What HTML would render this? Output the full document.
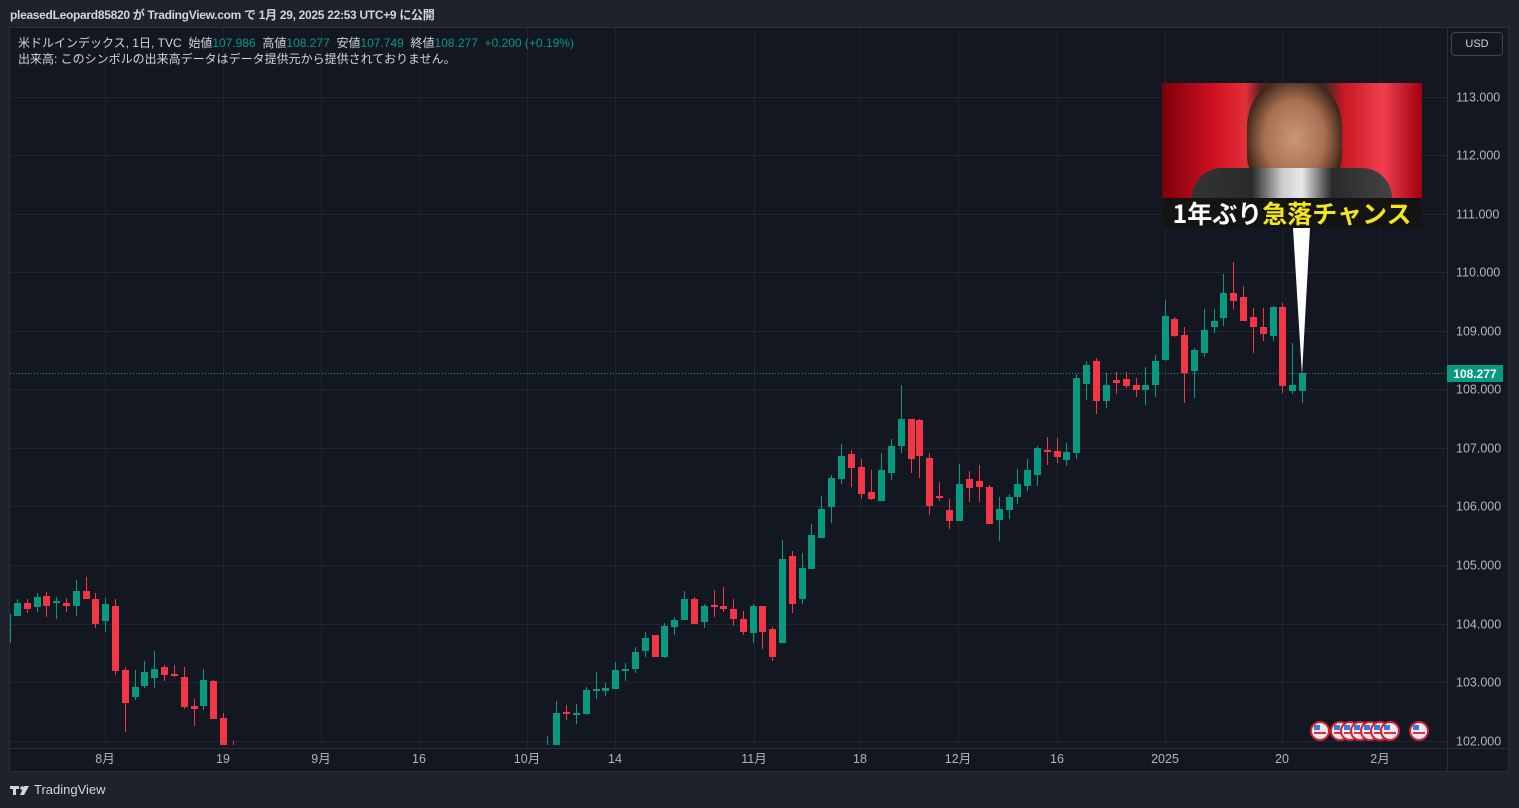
<!DOCTYPE html>
<html><head><meta charset="utf-8">
<style>
html,body{margin:0;padding:0;width:1519px;height:808px;overflow:hidden;background:#1e222d;font-family:"Liberation Sans","Noto Sans CJK JP",sans-serif;}
.hdr{position:absolute;left:10px;top:6px;font-size:12px;color:#d1d4dc;font-weight:bold;letter-spacing:-0.3px;}
.chart{position:absolute;left:9px;top:27px;width:1500px;height:745px;background:#131722;border:1px solid #2a2e39;box-sizing:border-box;}
.legend{position:absolute;left:18px;top:35px;font-size:12px;color:#d1d4dc;line-height:16px;}
.g{color:#089981}
.usd{position:absolute;left:1451px;top:32px;width:52px;height:24px;border:1px solid #434651;border-radius:4px;box-sizing:border-box;color:#d1d4dc;font-size:11px;text-align:center;line-height:22px;background:#131722;}
.foot{position:absolute;left:34px;top:782px;font-size:13px;color:#d1d4dc;}
</style></head><body>
<div class="hdr">pleasedLeopard85820 が TradingView.com で 1月 29, 2025 22:53 UTC+9 に公開</div>
<div class="chart"></div>
<svg id="s" width="1519" height="808" style="position:absolute;left:0;top:0">
</svg>
<div class="legend">米ドルインデックス, 1日, TVC&nbsp; 始値<span class="g">107.986</span>&nbsp; 高値<span class="g">108.277</span>&nbsp; 安値<span class="g">107.749</span>&nbsp; 終値<span class="g">108.277&nbsp; +0.200 (+0.19%)</span><br>出来高: このシンボルの出来高データはデータ提供元から提供されておりません。</div>
<div class="usd">USD</div>
<div style="position:absolute;left:1162px;top:83px;width:260px;height:145px;overflow:hidden;background:linear-gradient(90deg,#7a0008 0%,#d01020 20%,#e2303a 32%,#5a2020 38%,#3a2a28 62%,#c81824 70%,#f04050 85%,#a00010 100%);">
 <div style="position:absolute;left:85px;top:-5px;width:95px;height:110px;background:radial-gradient(ellipse at 50% 55%,#c89878 0%,#a87050 45%,#3a2218 75%,#1a1010 100%);border-radius:45% 45% 30% 30%"></div>
 <div style="position:absolute;left:30px;top:85px;width:200px;height:35px;background:linear-gradient(90deg,#333 0%,#2a2a2c 30%,#ccc 45%,#e8e8e8 55%,#2a2a2c 70%,#444 100%);border-radius:30px 30px 0 0"></div>
 <div style="position:absolute;left:0;top:115px;width:260px;height:30px;background:#141414;font-weight:bold;font-size:25px;line-height:30px;text-align:center;white-space:nowrap;font-family:'Noto Sans CJK JP',sans-serif;"><span style="color:#fff">1年ぶり</span><span style="color:#f5e51c">急落チャンス</span></div>
</div>
<div class="foot">TradingView</div>
<script>
var s=document.getElementById('s'),h='';
var ys=[97,155,214,272,331,389,448,506,565,624,682,741];
var vx=[105,223,321,419,527,615,754,860,958,1057,1165,1282,1380];
vx.forEach(function(x){h+='<line x1="'+(x+.5)+'" y1="28" x2="'+(x+.5)+'" y2="748" stroke="#1f2330"/>';});
ys.forEach(function(y){h+='<line x1="10" y1="'+(y+.5)+'" x2="1447" y2="'+(y+.5)+'" stroke="#222631"/>';});
h+='<line x1="1447.5" y1="28" x2="1447.5" y2="771" stroke="#2a2e39"/>';
h+='<line x1="10" y1="748.5" x2="1508" y2="748.5" stroke="#2a2e39"/>';
var pl=['113.000','112.000','111.000','110.000','109.000','108.000','107.000','106.000','105.000','104.000','103.000','102.000'];
pl.forEach(function(t,i){h+='<text x="1456" y="'+(ys[i]+4.5)+'" fill="#b2b5be" font-size="12.5">'+t+'</text>';});
var tl=['8月','19','9月','16','10月','14','11月','18','12月','16','2025','20','2月'];
tl.forEach(function(t,i){h+='<text x="'+vx[i]+'" y="763" fill="#b2b5be" font-size="12.5" text-anchor="middle">'+t+'</text>';});
h+='<line x1="10" y1="373.5" x2="1447" y2="373.5" stroke="#089981" stroke-dasharray="1,2"/>';
var G='#089981',R='#f23645';
var c=[
[10,614,643,614,643,G,1],
[17,603,616,599,616,G],[27,603,609,599,613,R],[37,597,607,593,612,G],[46,596,606,592,617,R],[56,601,603,597,619,G],[66,603,606,598,612,R],[76,591,606,580,616,G],[86,591,599,577,599,R],[95,599,624,593,628,R],[105,604,621,598,632,G],[115,606,671,599,675,R],[125,670,703,667,732,R],[135,687,697,670,700,G],[144,672,686,661,688,G],[154,669,678,651,688,G],[164,667,675,665,681,R],[174,674,676,665,677,R],[184,677,707,667,709,R],[194,706,709,699,726,R],[203,680,706,669,710,G],[213,681,719,680,719,R],[223,718,745,713,745,R],[233,741,745,741,745,R,1],
[547,736,745,736,745,G,1],[556,713,745,701,745,G],[566,712,714,705,720,R],[576,713,715,704,724,G],[586,690,714,687,715,G],[596,689,691,672,699,G],[605,688,691,683,696,G],[615,670,689,662,689,G],[625,669,671,663,681,G],[635,652,669,647,673,G],[645,638,651,632,657,G],[655,635,657,635,657,R],[664,626,657,623,658,G],[674,620,627,617,635,G],[684,599,620,591,620,G],[694,599,624,597,624,R],[704,606,622,604,628,G],[714,605,607,590,617,R],[723,606,609,587,612,R],[733,609,619,599,626,R],[743,619,632,611,635,R],[753,606,633,604,643,G],[762,606,632,606,649,R],[772,629,657,627,661,R],[782,559,643,540,643,G],[792,556,604,551,613,R],[802,568,599,553,604,G],[811,535,569,524,569,G],[821,509,538,496,538,G],[831,478,507,475,523,G],[841,456,479,444,484,G],[851,454,468,450,487,R],[861,467,494,459,499,R],[871,492,499,470,500,R],[881,470,501,453,501,G],[891,446,473,439,480,G],[901,419,446,385,453,G],[911,419,459,419,473,R],[919,420,456,419,478,R],[929,458,506,453,515,R],[939,496,498,482,501,R],[949,510,521,499,529,R],[959,484,521,464,521,G],[969,479,488,471,502,R],[979,481,487,465,502,R],[989,487,524,485,524,R],[999,509,520,497,541,G],[1009,497,510,494,519,G],[1017,484,497,469,504,G],[1027,470,486,459,491,G],[1037,448,475,446,486,G],[1047,450,452,437,465,R],[1057,451,457,438,463,R],[1066,452,460,443,466,G],[1076,378,453,374,459,G],[1086,365,384,361,400,G],[1096,361,401,358,414,R],[1106,385,401,373,408,G],[1116,380,383,372,394,R],[1126,379,386,372,388,R],[1136,385,390,378,397,R],[1145,385,390,367,405,G],[1155,361,385,355,397,G],[1165,316,360,300,361,G],[1174,319,336,317,337,R],[1184,335,373,327,403,R],[1194,350,371,348,398,G],[1204,330,353,309,357,G],[1214,321,327,309,333,G],[1223,293,318,274,326,G],[1233,293,301,262,309,R],[1243,297,321,286,321,R],[1253,317,327,308,353,R],[1263,327,334,308,341,R],[1273,307,336,306,341,G],[1282,307,386,303,393,R],[1292,385,391,343,394,G],[1302,373,391,373,403,G]];
c.forEach(function(d){var x=d[0];h+='<line x1="'+(x+.5)+'" y1="'+d[3]+'" x2="'+(x+.5)+'" y2="'+d[4]+'" stroke="'+d[5]+'"/>';if(!d[6])h+='<rect x="'+(x-3)+'" y="'+d[1]+'" width="7" height="'+Math.max(2,d[2]-d[1])+'" fill="'+d[5]+'"/>';});
h+='<polygon points="1293,228 1310,228 1302,375" fill="#ffffff"/>';
h+='<rect x="1447" y="365" width="56" height="17" fill="#089981"/><text x="1475" y="378" fill="#fff" font-size="12" font-weight="bold" text-anchor="middle">108.277</text>';
[1320,1340,1350,1360,1370,1380,1390,1419].forEach(function(x){h+='<circle cx="'+x+'" cy="731" r="9" fill="#e8e8f0" stroke="#d42030" stroke-width="2"/><rect x="'+(x-6)+'" y="725" width="6" height="5" fill="#3a7ad8"/><rect x="'+(x-6)+'" y="732" width="12" height="2" fill="#e03040"/>';});
h+='<g fill="#d1d4dc"><rect x="10" y="786" width="9" height="3"/><rect x="13" y="786" width="3" height="9"/><circle cx="22" cy="788" r="1.8"/><polygon points="24,786 29,786 24,795 20,795"/></g>';
s.innerHTML=h;
</script>
</body></html>
